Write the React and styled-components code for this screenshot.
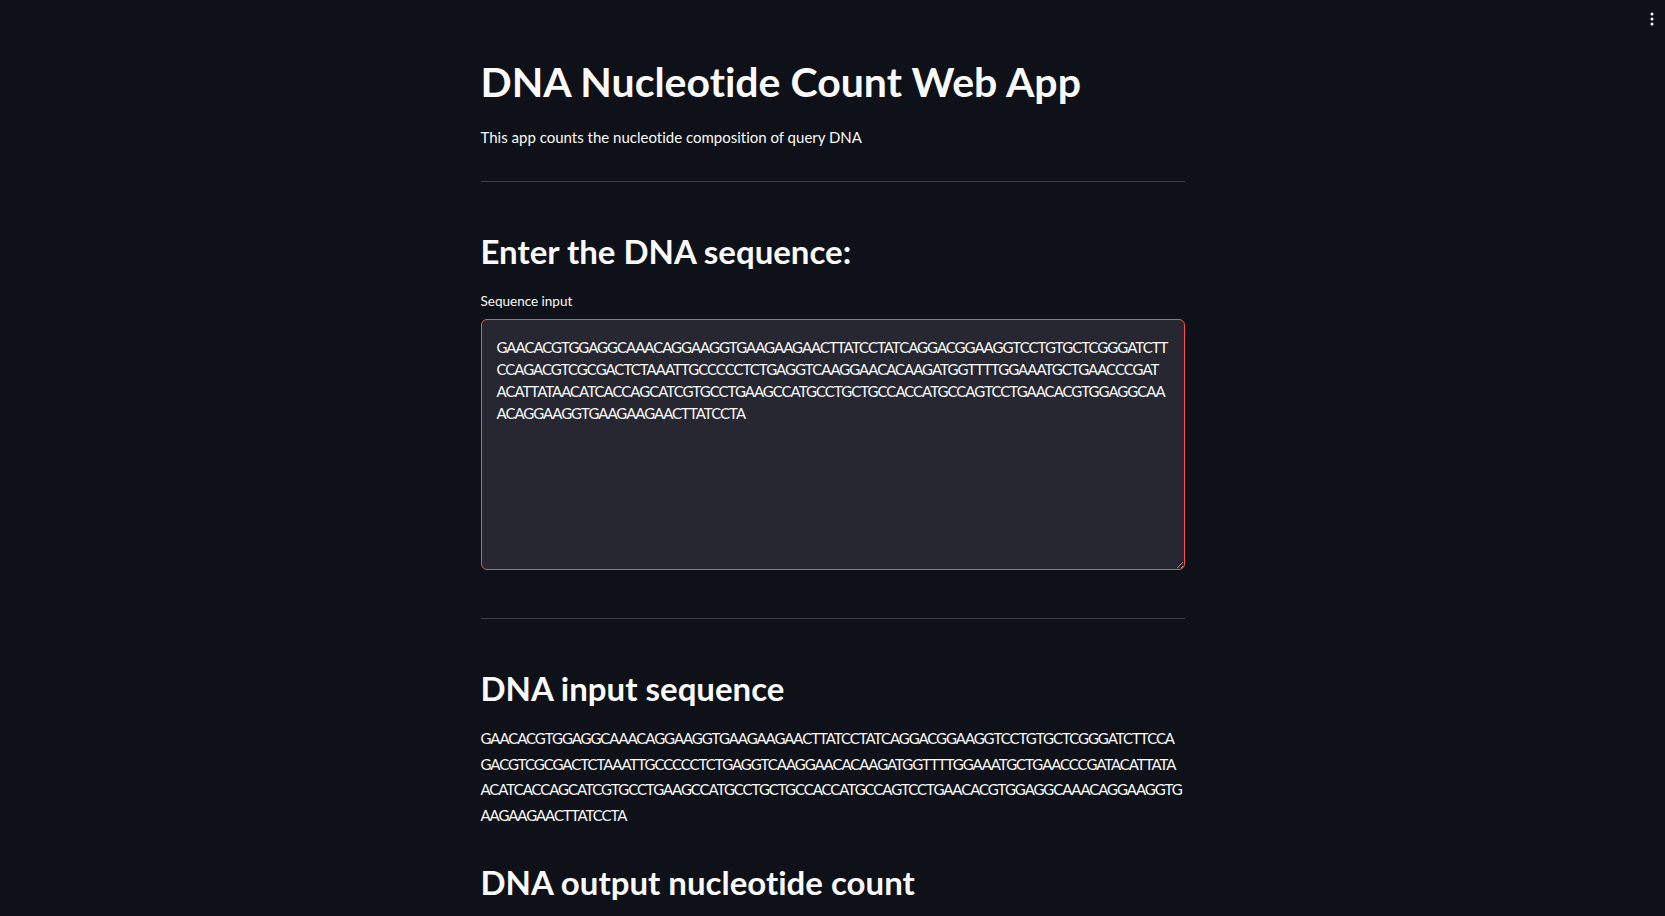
import React from 'react';
import styled, { createGlobalStyle } from 'styled-components';

const FONT = '"Source Sans Pro", Lato, sans-serif';

const GlobalStyle = createGlobalStyle`
  html {
    scrollbar-width: none;
  }
  body {
    margin: 0;
    background: #0e1117;
    color: #fafafa;
    font-family: ${FONT};
    font-variant-ligatures: no-common-ligatures;
  }
`;

const Header = styled.header`
  position: fixed;
  top: 0;
  right: 0;
  padding: 11px 5px 0 0;
  z-index: 5;
`;

const MenuButton = styled.button`
  display: block;
  padding: 0;
  border: none;
  background: none;
  color: #fafafa;
  cursor: pointer;
`;

const Main = styled.main`
  max-width: 736px;
  margin: 0 auto;
  padding: 57px 16px 48px;
  box-sizing: border-box;
`;

const Title = styled.h1`
  margin: 0 0 19px;
  font-size: 41px;
  font-weight: 700;
  line-height: 1.2;
`;

const Text = styled.p`
  margin: 0;
  font-size: 15px;
  line-height: 24px;
`;

const Rule = styled.hr`
  margin: ${(p) => p.$top}px 0 50px;
  border: none;
  border-top: 1px solid rgba(250, 250, 250, 0.2);
`;

const Heading = styled.h2`
  margin: 0 0 ${(p) => p.$gap}px;
  font-size: 33px;
  font-weight: 700;
  line-height: 1.2;
`;

const Label = styled.label`
  display: block;
  margin-bottom: 7px;
  font-size: 13.5px;
  line-height: 21.6px;
`;

const Area = styled.textarea`
  display: block;
  width: 100%;
  height: 251px;
  box-sizing: border-box;
  padding: 16px 15px;
  border: 1px solid #ff4b4b;
  border-radius: 6px;
  background: #262730;
  color: #fafafa;
  font-family: ${FONT};
  font-size: 15px;
  line-height: 22px;
  letter-spacing: -1px;
  white-space: pre;
  overflow: hidden;
  outline: none;
  resize: vertical;
`;

const Sequence = styled.p`
  margin: 0 0 35px;
  font-size: 15px;
  line-height: 25.6px;
  letter-spacing: -1.05px;
  white-space: nowrap;
`;

const INPUT = [
  'GAACACGTGGAGGCAAACAGGAAGGTGAAGAAGAACTTATCCTATCAGGACGGAAGGTCCTGTGCTCGGGATCTT',
  'CCAGACGTCGCGACTCTAAATTGCCCCCTCTGAGGTCAAGGAACACAAGATGGTTTTGGAAATGCTGAACCCGAT',
  'ACATTATAACATCACCAGCATCGTGCCTGAAGCCATGCCTGCTGCCACCATGCCAGTCCTGAACACGTGGAGGCAA',
  'ACAGGAAGGTGAAGAAGAACTTATCCTA',
];

const OUTPUT = [
  'GAACACGTGGAGGCAAACAGGAAGGTGAAGAAGAACTTATCCTATCAGGACGGAAGGTCCTGTGCTCGGGATCTTCCA',
  'GACGTCGCGACTCTAAATTGCCCCCTCTGAGGTCAAGGAACACAAGATGGTTTTGGAAATGCTGAACCCGATACATTATA',
  'ACATCACCAGCATCGTGCCTGAAGCCATGCCTGCTGCCACCATGCCAGTCCTGAACACGTGGAGGCAAACAGGAAGGTG',
  'AAGAAGAACTTATCCTA',
];

export default function App() {
  return (
    <>
      <GlobalStyle />
      <Header>
        <MenuButton aria-label="Main menu">
          <svg width="16" height="16" viewBox="0 0 16 16" fill="currentColor">
            <circle cx="8" cy="3" r="1.5" />
            <circle cx="8" cy="8" r="1.5" />
            <circle cx="8" cy="13" r="1.5" />
          </svg>
        </MenuButton>
      </Header>
      <Main>
        <Title>DNA Nucleotide Count Web App</Title>
        <Text>This app counts the nucleotide composition of query DNA</Text>
        <Rule $top={32} />
        <Heading $gap={19}>Enter the DNA sequence:</Heading>
        <Label htmlFor="seq">Sequence input</Label>
        <Area id="seq" wrap="off" spellCheck={false} defaultValue={INPUT.join('\n')} />
        <Rule $top={48} />
        <Heading $gap={17}>DNA input sequence</Heading>
        <Sequence>
          {OUTPUT.map((line, i) => (
            <React.Fragment key={i}>
              {line}
              {i < OUTPUT.length - 1 && <br />}
            </React.Fragment>
          ))}
        </Sequence>
        <Heading $gap={16}>DNA output nucleotide count</Heading>
      </Main>
    </>
  );
}
